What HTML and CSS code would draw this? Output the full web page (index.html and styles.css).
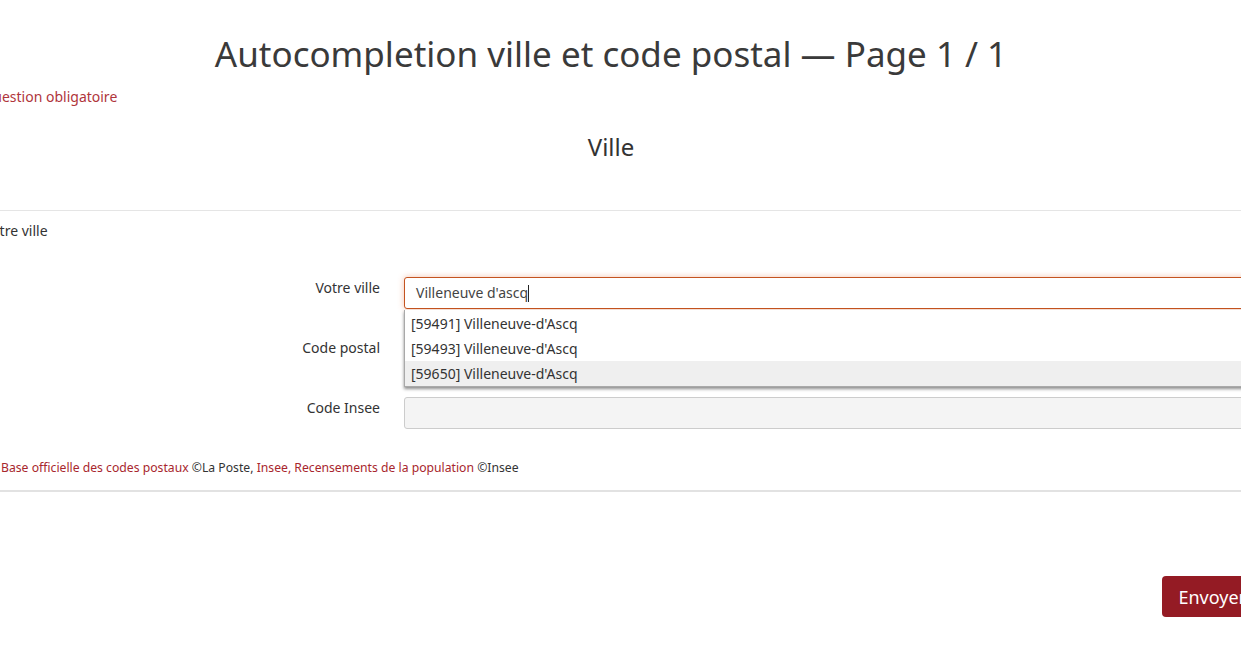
FILE: index.html
```html
<!DOCTYPE html>
<html lang="fr">
<head>
<meta charset="utf-8">
<title>Autocompletion ville et code postal</title>
<link rel="stylesheet" href="styles.css">
</head>
<body>
<div class="page">
  <h1 class="title">Autocompletion ville et code postal — Page 1 / 1</h1>
  <p class="required">* Question obligatoire</p>
  <h2 class="group-title">Ville</h2>
  <div class="group">
    <div class="legend">Votre ville</div>
    <div class="rows">
      <div class="row">
        <label class="label">Votre ville</label>
        <div class="field">
          <div class="input focused">Villeneuve d'ascq<span class="caret"></span></div>
          <ul class="dropdown">
            <li class="item">[59491] Villeneuve-d'Ascq</li>
            <li class="item">[59493] Villeneuve-d'Ascq</li>
            <li class="item active">[59650] Villeneuve-d'Ascq</li>
          </ul>
        </div>
      </div>
      <div class="row">
        <label class="label">Code postal</label>
        <div class="field"><div class="input"></div></div>
      </div>
      <div class="row">
        <label class="label">Code Insee</label>
        <div class="field"><div class="input readonly"></div></div>
      </div>
    </div>
    <p class="sources"><a class="link">Base officielle des codes postaux</a> ©La Poste, <a class="link">Insee, Recensements de la population</a> ©Insee</p>
  </div>
  <div class="actions">
    <button class="submit">Envoyer</button>
  </div>
</div>
</body>
</html>
```
FILE: styles.css
```css
html, body {
  margin: 0;
  padding: 0;
  background: #fff;
  overflow: hidden;
}
body {
  font-family: "Noto Sans", "Open Sans", sans-serif;
  color: #333;
  font-size: 14px;
}
.page {
  width: 1302px;
  margin-left: -40px;
}
.title {
  margin: 0;
  padding-top: 30px;
  font-size: 35px;
  font-weight: 400;
  line-height: 48px;
  text-align: center;
  color: #3a3a3a;
}
.required {
  margin: 9px 0 0 11px;
  line-height: 20px;
  color: #b0353b;
  font-size: 14px;
}
.group-title {
  margin: 24px 0 0;
  font-size: 24px;
  font-weight: 400;
  line-height: 32px;
  text-align: center;
  color: #333;
}
.group {
  margin-top: 47px;
  border-top: 1px solid #e5e5e5;
  border-bottom: 2px solid #e2e2e2;
}
.legend {
  margin: 10px 0 0 23px;
  line-height: 20px;
}
.rows {
  margin-top: 36px;
  display: flex;
  flex-direction: column;
  gap: 28px;
}
.row {
  display: grid;
  grid-template-columns: 420px 1fr;
  column-gap: 24px;
}
.label {
  text-align: right;
  line-height: 20px;
  padding-top: 1px;
}
.field {
  position: relative;
}
.input {
  height: 30px;
  border: 1px solid #ccc;
  border-radius: 3px;
  line-height: 30px;
  padding-left: 11px;
  font-size: 14px;
  color: #444;
  background: #fff;
}
.input.focused {
  border-color: #c4531f;
  box-shadow: 0 0 6px rgba(230, 120, 70, 0.45);
}
.input.readonly {
  background: #f4f4f4;
}
.caret {
  display: inline-block;
  width: 1px;
  height: 17px;
  background: #222;
  vertical-align: -4px;
}
.dropdown {
  position: absolute;
  left: 0;
  right: 0;
  top: 33px;
  margin: 0;
  padding: 1px 0 0;
  list-style: none;
  background: #fff;
  border: 1px solid #a9a9a9;
  border-top: none;
  box-shadow: 0 2px 3px rgba(0, 0, 0, 0.45);
  z-index: 2;
}
.item {
  height: 25px;
  line-height: 25px;
  padding-left: 6px;
  color: #333;
}
.item.active {
  background: #efefef;
}
.sources {
  margin: 31px 0 0 41px;
  padding-bottom: 14px;
  font-size: 12.2px;
  line-height: 16px;
  color: #333;
}
.link {
  color: #a8262d;
}
.actions {
  display: flex;
  justify-content: flex-end;
  padding-top: 84px;
}
.submit {
  height: 41px;
  padding: 0 16px;
  border: none;
  border-radius: 4px;
  background: #941b24;
  color: #fff;
  font-family: "Noto Sans", "Open Sans", sans-serif;
  font-size: 18px;
}
```
